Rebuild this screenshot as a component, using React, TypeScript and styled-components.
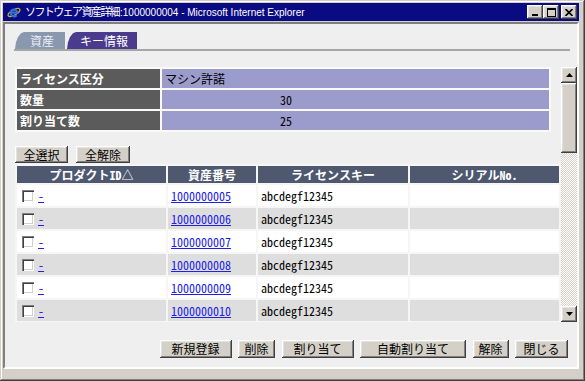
import React from "react";
import styled, { createGlobalStyle } from "styled-components";

const GOTHIC = `"Noto Sans Mono CJK JP", "Noto Sans CJK JP", "DejaVu Sans Mono", monospace`;
const UI = `"Noto Sans CJK JP", "Liberation Sans", sans-serif`;

const Global = createGlobalStyle`
  html, body { margin: 0; padding: 0; background: #d4d0c8; overflow: hidden; }
  #root { width: 585px; height: 381px; }
  * { box-sizing: border-box; }
`;

const bevelOut = `
  box-shadow: inset -1px -1px #404040, inset 1px 1px #ffffff, inset -2px -2px #808080, inset 2px 2px #e4e2dc;
`;

const Window = styled.div`
  width: 585px;
  height: 381px;
  background: #d4d0c8;
  padding: 3px 6px 12px 3px;
  display: flex;
  flex-direction: column;
  box-shadow: inset -1px -1px #404040, inset 1px 1px #d4d0c8, inset -2px -2px #808080, inset 2px 2px #ffffff;
`;

const TitleBar = styled.div`
  height: 18px;
  flex: none;
  background: #0a0a82;
  display: flex;
  align-items: center;
  padding: 0 2px 0 4px;
  gap: 4px;
`;

const TitleText = styled.div`
  flex: 1;
  color: #ffffff;
  font-family: "Liberation Sans", "Noto Sans CJK JP", sans-serif;
  font-size: 10px;
  line-height: 18px;
  white-space: nowrap;
  overflow: hidden;
`;

const TitleJa = styled.span`
  font-family: "Noto Sans CJK JP", sans-serif;
  font-size: 11px;
  letter-spacing: -1.6px;
  margin-right: 1px;
`;

const WinButtons = styled.div`
  display: flex;
  align-items: center;
`;

const WinBtn = styled.div<{ $gap?: boolean }>`
  width: 16px;
  height: 14px;
  margin-left: ${(p) => (p.$gap ? "2px" : "0")};
  background: #d4d0c8;
  display: flex;
  align-items: center;
  justify-content: center;
  ${bevelOut}
`;

const Client = styled.div`
  flex: 1;
  margin-top: 1px;
  background: #efefef;
  border: 2px solid;
  border-color: #808080 #ffffff #ffffff #808080;
  display: flex;
  flex-direction: column;
  padding-top: 8px;
  min-height: 0;
`;

const TabBar = styled.div`
  display: flex;
  align-items: flex-end;
  gap: 2px;
  margin: 0 7px 0 9px;
  padding-left: 1px;
  border-bottom: 2px solid #a6a6a6;
`;

const Tab = styled.div<{ $active?: boolean; $w: number }>`
  width: ${(p) => p.$w}px;
  height: 17px;
  background: ${(p) => (p.$active ? "#4b3b8d" : "#8998ae")};
  color: ${(p) => (p.$active ? "#ffffff" : "#eef0f8")};
  font-family: ${UI};
  font-size: 12px;
  line-height: 17px;
  text-align: center;
  padding-left: 4px;
  clip-path: polygon(0 100%, 1px 60%, 3px 30%, 6px 8%, 9px 0, 100% 0, 100% 100%);
`;

const ScrollRegion = styled.div`
  display: flex;
  height: 255px;
  margin-top: 16px;
  flex: none;
`;

const ScrollContent = styled.div`
  flex: 1;
  min-width: 0;
  padding-left: 10px;
  overflow: hidden;
`;

const Scrollbar = styled.div`
  width: 16px;
  flex: none;
  display: flex;
  flex-direction: column;
  background: repeating-conic-gradient(#d4d0c8 0 25%, #ffffff 0 50%) 0 0 / 2px 2px;
`;

const ScrollBtn = styled.div`
  width: 16px;
  height: 16px;
  flex: none;
  background: #d4d0c8;
  display: flex;
  align-items: center;
  justify-content: center;
  ${bevelOut}
`;

const Thumb = styled.div`
  height: 70px;
  flex: none;
  background: #d4d0c8;
  ${bevelOut}
`;

const Track = styled.div`
  flex: 1;
`;

const InfoTable = styled.table`
  width: 536px;
  border-spacing: 2px;
  table-layout: fixed;
  background: #fafafa;
`;

const InfoLabel = styled.th`
  width: 143px;
  height: 19px;
  padding: 0 3px;
  background: #5b5b5b;
  color: #ffffff;
  font-family: ${UI};
  font-weight: bold;
  font-size: 12px;
  line-height: 19px;
  text-align: left;
`;

const InfoValue = styled.td`
  height: 19px;
  padding: 0 3px;
  background: #9c9ccc;
  color: #000000;
  font-family: ${GOTHIC};
  font-size: 12px;
  line-height: 19px;
`;

const NumValue = styled.span`
  display: inline-block;
  width: 127px;
  text-align: right;
`;

const SelectBar = styled.div`
  display: flex;
  gap: 8px;
  margin-top: 14px;
`;

const Button = styled.div<{ $w: number; $h?: number }>`
  width: ${(p) => p.$w}px;
  height: ${(p) => p.$h ?? 18}px;
  background: #d4d0c8;
  color: #000000;
  font-family: ${UI};
  font-size: 12px;
  line-height: ${(p) => p.$h ?? 18}px;
  text-align: center;
  white-space: nowrap;
  ${bevelOut}
`;

const DataTable = styled.table`
  width: 546px;
  margin-top: 1px;
  border-spacing: 2px;
  table-layout: fixed;
  background: #f6f6f6;
`;

const HeadCell = styled.th`
  height: 17px;
  padding: 0;
  background: #4e586f;
  color: #ffffff;
  font-family: ${GOTHIC};
  font-weight: bold;
  font-size: 12px;
  line-height: 17px;
  text-align: center;
  white-space: nowrap;
`;

const BodyRow = styled.tr<{ $alt?: boolean }>`
  background: ${(p) => (p.$alt ? "#dedede" : "#ffffff")};
`;

const Cell = styled.td`
  height: 21px;
  padding: 0 3px;
  font-family: ${GOTHIC};
  font-size: 12px;
  line-height: 21px;
  color: #000000;
  white-space: nowrap;
  overflow: hidden;
`;

const CheckCell = styled(Cell)`
  padding-left: 5px;
`;

const CheckRow = styled.div`
  display: flex;
  align-items: center;
  gap: 4px;
`;

const Check = styled.span`
  width: 12px;
  height: 12px;
  background: #ffffff;
  box-shadow: inset 1px 1px #808080, inset 2px 2px #404040, inset -1px -1px #ffffff, inset -2px -2px #d4d0c8;
  flex: none;
`;

const Link = styled.a`
  color: #2020e8;
  text-decoration: underline;
`;

const Footer = styled.div`
  display: flex;
  justify-content: flex-end;
  gap: 6.5px;
  margin-top: 18px;
  padding-right: 9px;
`;

const IEIcon = () => (
  <svg width="14" height="14" viewBox="0 0 14 14">
    <ellipse cx="7" cy="7.5" rx="6.6" ry="2.6" fill="none" stroke="#e8b020" strokeWidth="1.2" transform="rotate(-30 7 7.5)" />
    <path d="M3.8 7.6 H10.4 A3.4 3.4 0 1 0 9.6 10.2" fill="none" stroke="#2f6fd8" strokeWidth="2.2" />
  </svg>
);

const MinGlyph = () => (
  <svg width="8" height="7" viewBox="0 0 8 7">
    <rect x="1" y="5" width="6" height="2" fill="#000" />
  </svg>
);

const MaxGlyph = () => (
  <svg width="9" height="9" viewBox="0 0 9 9">
    <rect x="0.5" y="0.5" width="8" height="8" fill="none" stroke="#000" />
    <rect x="0" y="0" width="9" height="2" fill="#000" />
  </svg>
);

const CloseGlyph = () => (
  <svg width="8" height="7" viewBox="0 0 8 7">
    <path d="M0.5 0 L7.5 7 M7.5 0 L0.5 7" stroke="#000" strokeWidth="1.6" />
  </svg>
);

const UpArrow = () => (
  <svg width="7" height="4" viewBox="0 0 7 4">
    <path d="M3.5 0 L7 4 L0 4 Z" fill="#000" />
  </svg>
);

const DownArrow = () => (
  <svg width="7" height="4" viewBox="0 0 7 4">
    <path d="M0 0 L7 0 L3.5 4 Z" fill="#000" />
  </svg>
);

const rows = ["1000000005", "1000000006", "1000000007", "1000000008", "1000000009", "1000000010"];

export default function App() {
  return (
    <>
      <Global />
      <Window>
        <TitleBar>
          <IEIcon />
          <TitleText>
            <TitleJa>ソフトウェア資産詳細</TitleJa>:1000000004 - Microsoft Internet Explorer
          </TitleText>
          <WinButtons>
            <WinBtn><MinGlyph /></WinBtn>
            <WinBtn><MaxGlyph /></WinBtn>
            <WinBtn $gap><CloseGlyph /></WinBtn>
          </WinButtons>
        </TitleBar>
        <Client>
          <TabBar>
            <Tab $w={50}>資産</Tab>
            <Tab $w={70} $active>キー情報</Tab>
          </TabBar>
          <ScrollRegion>
            <ScrollContent>
              <InfoTable>
                <tbody>
                  <tr>
                    <InfoLabel>ライセンス区分</InfoLabel>
                    <InfoValue>マシン許諾</InfoValue>
                  </tr>
                  <tr>
                    <InfoLabel>数量</InfoLabel>
                    <InfoValue><NumValue>30</NumValue></InfoValue>
                  </tr>
                  <tr>
                    <InfoLabel>割り当て数</InfoLabel>
                    <InfoValue><NumValue>25</NumValue></InfoValue>
                  </tr>
                </tbody>
              </InfoTable>
              <SelectBar>
                <Button $w={53} $h={17}>全選択</Button>
                <Button $w={54} $h={17}>全解除</Button>
              </SelectBar>
              <DataTable>
                <colgroup>
                  <col style={{ width: 149 }} />
                  <col style={{ width: 88 }} />
                  <col style={{ width: 150 }} />
                  <col style={{ width: 149 }} />
                </colgroup>
                <thead>
                  <tr>
                    <HeadCell>プロダクトID△</HeadCell>
                    <HeadCell>資産番号</HeadCell>
                    <HeadCell>ライセンスキー</HeadCell>
                    <HeadCell>シリアルNo.</HeadCell>
                  </tr>
                </thead>
                <tbody>
                  {rows.map((id, i) => (
                    <BodyRow key={id} $alt={i % 2 === 1}>
                      <CheckCell>
                        <CheckRow>
                          <Check />
                          <Link href="#">-</Link>
                        </CheckRow>
                      </CheckCell>
                      <Cell><Link href="#">{id}</Link></Cell>
                      <Cell>abcdegf12345</Cell>
                      <Cell></Cell>
                    </BodyRow>
                  ))}
                </tbody>
              </DataTable>
            </ScrollContent>
            <Scrollbar>
              <ScrollBtn><UpArrow /></ScrollBtn>
              <Thumb />
              <Track />
              <ScrollBtn><DownArrow /></ScrollBtn>
            </Scrollbar>
          </ScrollRegion>
          <Footer>
            <Button $w={72}>新規登録</Button>
            <Button $w={37}>削除</Button>
            <Button $w={72}>割り当て</Button>
            <Button $w={106}>自動割り当て</Button>
            <Button $w={36}>解除</Button>
            <Button $w={53}>閉じる</Button>
          </Footer>
        </Client>
      </Window>
    </>
  );
}
